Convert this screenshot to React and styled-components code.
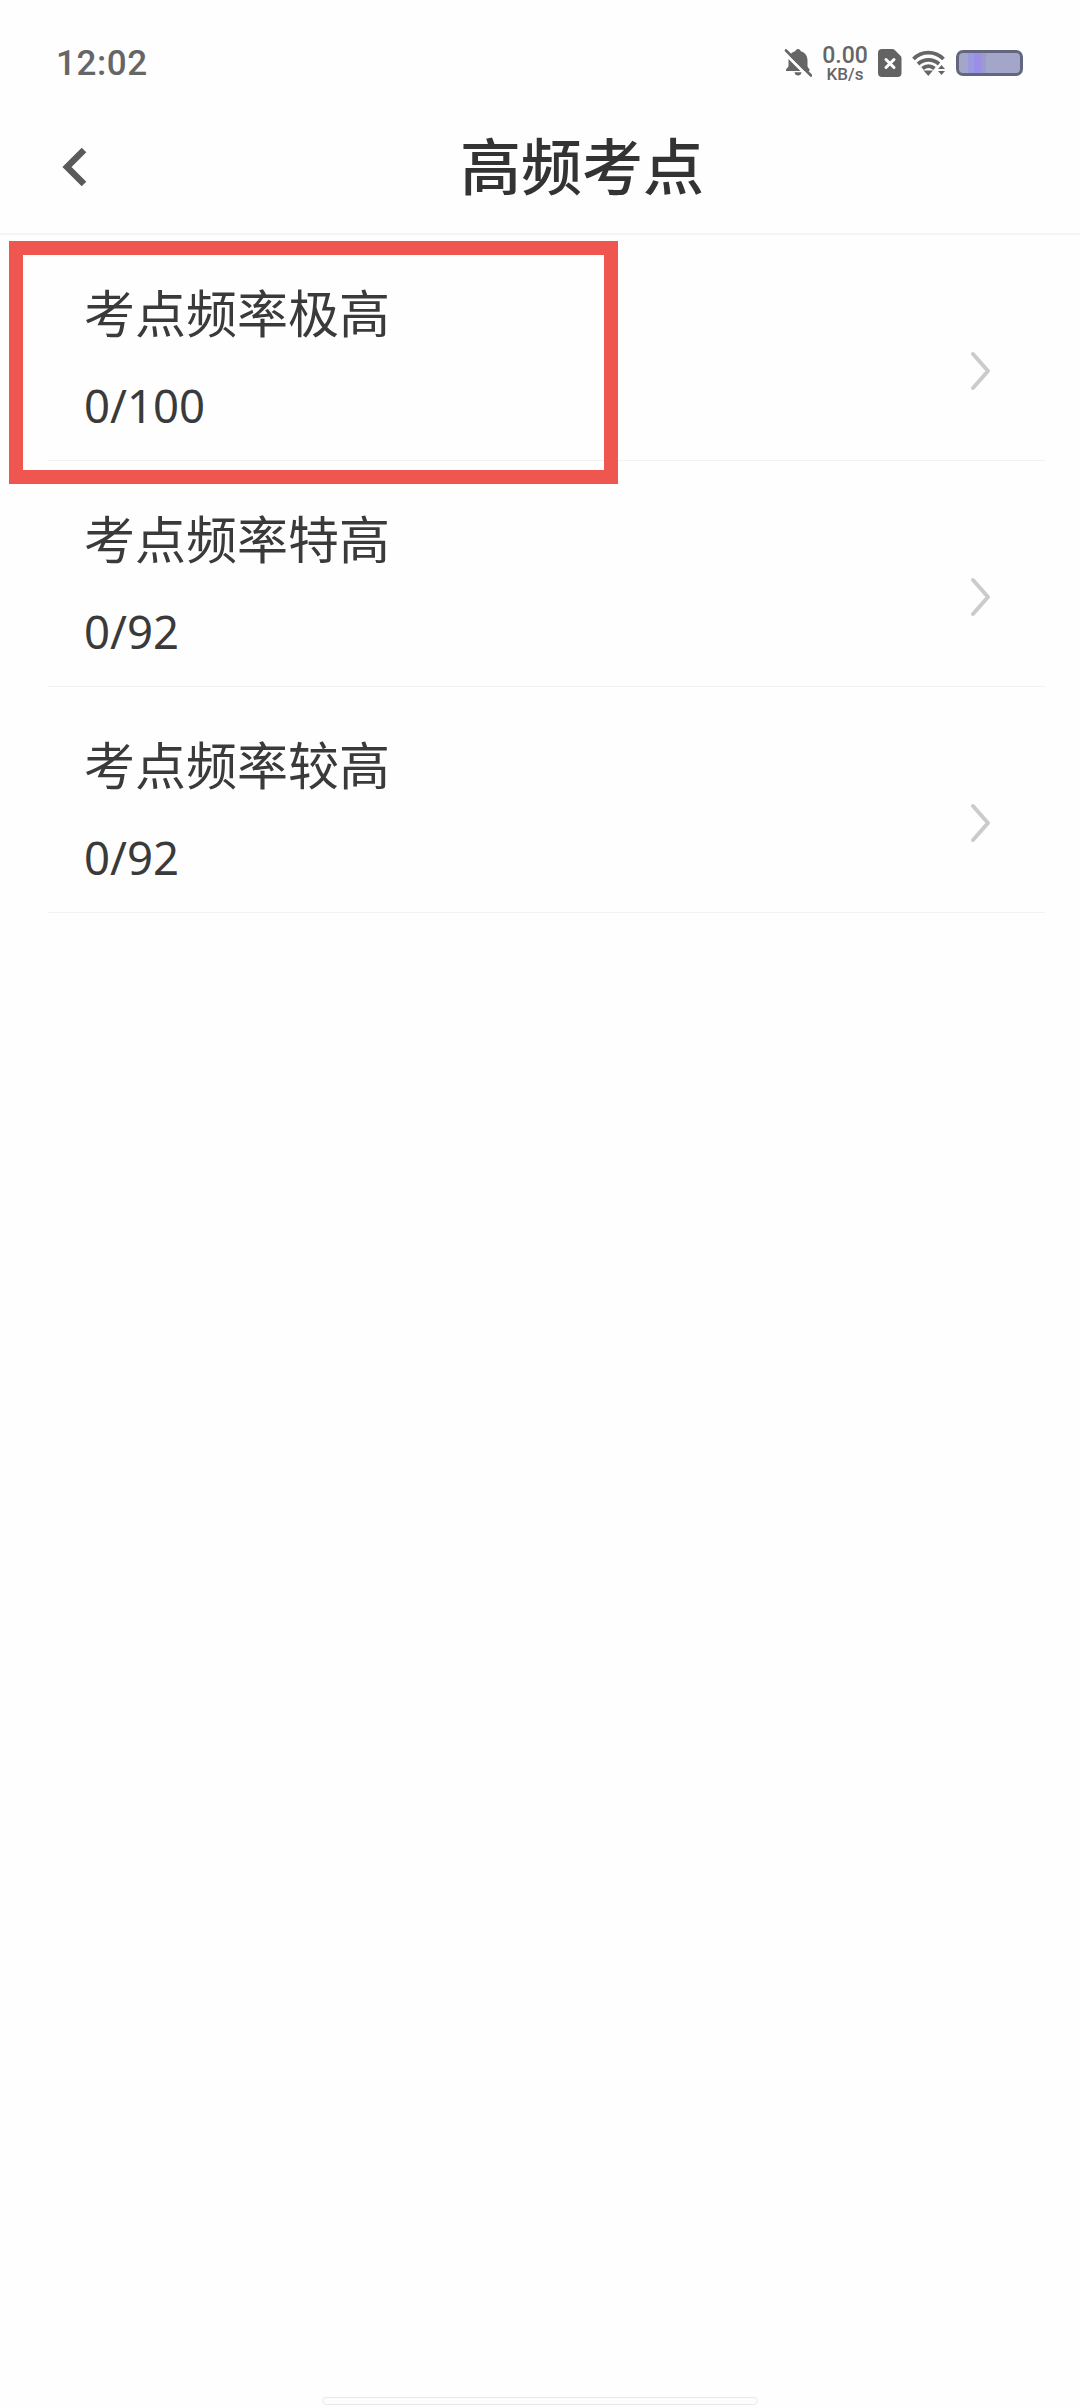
import styled, { createGlobalStyle } from "styled-components";

const GlobalStyle = createGlobalStyle`
    html, body {
        margin: 0;
        padding: 0;
        background: #fff;
    }
    body {
        font-family: "Noto Sans", "Noto Sans CJK SC", sans-serif;
    }
`;

const Page = styled.div`
    width: 1080px;
    height: 2408px;
    display: flex;
    flex-direction: column;
    background: #fefefe;
    overflow: hidden;
`;

const StatusBar = styled.div`
    height: 100px;
    box-sizing: border-box;
    padding: 26px 57px 0 56px;
    display: flex;
    align-items: center;
    justify-content: space-between;
    color: #666;
`;

const Time = styled.span`
    font-family: Roboto, sans-serif;
    font-size: 35px;
    font-weight: 500;
    letter-spacing: 0.6px;
`;

const StatusIcons = styled.div`
    display: flex;
    align-items: center;
    gap: 10px;
`;

const Speed = styled.div`
    width: 46px;
    padding-top: 2px;
    display: flex;
    flex-direction: column;
    align-items: center;
    font-family: Roboto, sans-serif;
    font-weight: 500;
    color: #666;
`;

const SpeedValue = styled.span`
    font-size: 23px;
    line-height: 20px;
`;

const SpeedUnit = styled.span`
    font-size: 17px;
    line-height: 17px;
`;

const Battery = styled.div`
    width: 67px;
    height: 26px;
    box-sizing: border-box;
    border: 3px solid #62667f;
    border-radius: 7px;
    background: linear-gradient(
        to right,
        #a3a6c8 0 9px,
        #9a9ae0 9px 15px,
        #9c8ee6 15px 22px,
        #9a9cd0 22px 27px,
        #a3a6c8 27px
    );
`;

const Header = styled.header`
    height: 135px;
    box-sizing: border-box;
    padding: 0 0 6px 84px;
    border-bottom: 2px solid #f6f5f3;
    position: relative;
    display: flex;
    align-items: center;
    justify-content: center;
`;

const BackButton = styled.button`
    position: absolute;
    left: 60px;
    top: 46px;
    padding: 0;
    border: 0;
    background: none;
    display: flex;
`;

const Title = styled.h1`
    margin: 0;
    font-family: "Noto Sans CJK SC", sans-serif;
    font-size: 61px;
    font-weight: 500;
    color: #333;
    line-height: 1;
`;

const List = styled.div`
    display: flex;
    flex-direction: column;
`;

const Row = styled.div`
    position: relative;
    height: 226px;
    margin: 0 35px 0 48px;
    padding: 46px 54px 0 36px;
    box-sizing: border-box;
    border-bottom: 1px solid #f2f2f2;
    display: flex;
    justify-content: space-between;
`;

const RowText = styled.div`
    display: flex;
    flex-direction: column;
    gap: 34px;
`;

const RowTitle = styled.div`
    font-family: "Noto Sans CJK SC", sans-serif;
    font-size: 51px;
    line-height: 60px;
    color: #3a3a3a;
`;

const RowCount = styled.div`
    font-family: "Noto Sans", sans-serif;
    font-size: 45.500px;
    line-height: 60px;
    color: #3a3a3a;
`;

const Chevron = styled.svg`
    margin-top: 70px;
`;

const Highlight = styled.div`
    position: absolute;
    left: -39px;
    top: 6px;
    width: 609px;
    height: 243px;
    box-sizing: border-box;
    border: 14px solid #ef5650;
`;

const HomeBar = styled.div`
    width: 436px;
    height: 8px;
    box-sizing: border-box;
    margin: auto 0 3px 322px;
    border: 1px solid #e9e9e9;
    border-radius: 4px;
    background: #fdfdfd;
`;

const rows = [
    { name: "考点频率极高", count: "0/100", marked: true },
    { name: "考点频率特高", count: "0/92" },
    { name: "考点频率较高", count: "0/92" },
];

const BellOff = () => (
    <svg width="28" height="28" viewBox="0 0 28 28" fill="#666">
        <path d="M14 0c1.500 0 2.500 1 2.700 2.300 4.300 1.100 6.800 4.600 6.800 9v6.200l2 3V22H2v-1.500l2.500-3v-6.200c0-4.400 2.500-7.900 6.800-9C11.500 1 12.500 0 14 0z" />
        <path d="M10.500 23.200h7c-.2 2-1.700 3.300-3.500 3.300s-3.300-1.300-3.500-3.300z" />
        <path d="M0 3.500 24.500 28" stroke="#fff" strokeWidth="3" />
        <path d="M2 1.500 27 26.500" stroke="#666" strokeWidth="2.600" strokeLinecap="round" />
    </svg>
);

const SimError = () => (
    <svg width="24" height="28" viewBox="0 0 24 28">
        <path d="M4 0h10.500a3 3 0 0 1 2 .8l6 6a3 3 0 0 1 1 2.200V24a4 4 0 0 1-4 4H4a4 4 0 0 1-4-4V4a4 4 0 0 1 4-4z" fill="#636363" />
        <path d="M8 10.500 16 18.500M16 10.500 8 18.500" stroke="#fff" strokeWidth="3" strokeLinecap="round" />
    </svg>
);

const Wifi = () => (
    <svg width="34" height="26" viewBox="0 0 34 26" fill="none" stroke="#666" strokeWidth="3.800">
        <path d="M1.500 9C9.500 .5 23 .5 31.500 9" />
        <path d="M6 14c6-5.500 15-5.500 21 0" />
        <path d="M10.500 18.500c3.500-3 8.500-3 12 0" />
        <path d="M11.500 20.500h9.500L16.300 26z" fill="#666" stroke="none" />
        <path d="M29.500 15l3.500 4h-7zM26 21h7l-3.500 4z" fill="#666" stroke="none" />
    </svg>
);

const App = () => {
    return (
        <Page>
            <GlobalStyle />
            <StatusBar>
                <Time>12:02</Time>
                <StatusIcons>
                    <BellOff />
                    <Speed>
                        <SpeedValue>0.00</SpeedValue>
                        <SpeedUnit>KB/s</SpeedUnit>
                    </Speed>
                    <SimError />
                    <Wifi />
                    <Battery />
                </StatusIcons>
            </StatusBar>
            <Header>
                <BackButton aria-label="back">
                    <svg width="28" height="42" viewBox="0 0 28 42" fill="none">
                        <path d="M24 4 7 21l17 17" stroke="#5a5a5a" strokeWidth="6.500" />
                    </svg>
                </BackButton>
                <Title>高频考点</Title>
            </Header>
            <List>
                {rows.map((row) => (
                    <Row key={row.name}>
                        <RowText>
                            <RowTitle>{row.name}</RowTitle>
                            <RowCount>{row.count}</RowCount>
                        </RowText>
                        <Chevron width="22" height="40" viewBox="0 0 22 40" fill="none">
                            <path d="M4 3l15 17L4 37" stroke="#cbcbcb" strokeWidth="4" strokeLinecap="round" strokeLinejoin="round" />
                        </Chevron>
                        {row.marked && <Highlight />}
                    </Row>
                ))}
            </List>
            <HomeBar />
        </Page>
    );
};

export default App;
